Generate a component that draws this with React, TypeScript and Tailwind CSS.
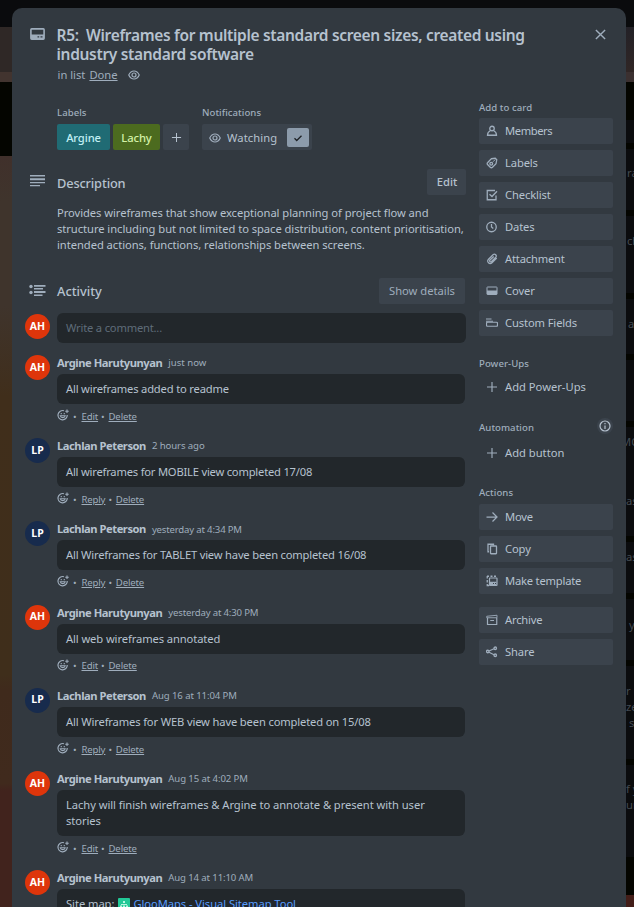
import type { ReactNode } from "react";

type IconProps = { className?: string };

function Svg({ children, className = "size-3" }: { children: ReactNode; className?: string }) {
  return (
    <svg viewBox="0 0 24 24" fill="none" stroke="currentColor" strokeWidth="2" className={`block shrink-0 ${className}`}>
      {children}
    </svg>
  );
}

const CardIcon = () => (
  <svg viewBox="0 0 15 12" className="block h-3 w-[15px] shrink-0 text-[#9fadbc]" fill="none">
    <rect x="0.9" y="0.9" width="13.200" height="10.200" rx="0.8" stroke="currentColor" strokeWidth="1.600" />
    <path d="M1 6.500h13V11H1z" fill="currentColor" />
    <path d="M7.500 8.800h1.700M10.500 8.800h2" stroke="#323940" strokeWidth="1.200" />
  </svg>
);
const EyeIcon = ({ className }: IconProps) => (
  <Svg className={className}>
    <path d="M1.500 12C4 6.500 7.500 4 12 4s8 2.500 10.500 8c-2.500 5.500-6 8-10.500 8s-8-2.500-10.500-8z" strokeWidth="2.400" />
    <circle cx="12" cy="12" r="4" strokeWidth="2.400" />
  </Svg>
);
const PlusIcon = ({ className }: IconProps) => (
  <Svg className={className}><path d="M12 2v20M2 12h20" strokeWidth="2.300" /></Svg>
);
const CheckIcon = ({ className }: IconProps) => (
  <Svg className={className}><path d="M5 12.500l4.500 4.500L19 7.500" strokeWidth="2.600" /></Svg>
);
const CloseIcon = ({ className }: IconProps) => (
  <Svg className={className}><path d="M3.500 3.500l17 17M20.500 3.500l-17 17" strokeWidth="2.600" /></Svg>
);
const MemberIcon = () => (
  <Svg className="mb-px size-3">
    <circle cx="12" cy="7" r="4.500" strokeWidth="2.600" />
    <path d="M8.500 11.500C4.500 13.500 3 16 3 20.500h18c0-4.500-1.500-7-5.500-9" strokeWidth="2.600" />
  </Svg>
);
const LabelIcon = () => (
  <Svg>
    <path d="M10.500 3.500l8-1 3 3-1.500 8-7 7c-1.500 1.500-3 1.500-4.500 0l-5-5c-1.500-1.500-1.500-3 0-4.500z" strokeWidth="2.600" />
    <circle cx="10.500" cy="13.500" r="2.800" strokeWidth="2.600" />
    <path d="M14 9.500l4-4" />
  </Svg>
);
const ChecklistIcon = () => (
  <Svg className="mb-px size-3">
    <path d="M18 3H2.500v18.500H20V13" strokeWidth="2.600" />
    <path d="M7 10.500l5 4.500L22 4.500" strokeWidth="2.800" />
  </Svg>
);
const ClockIcon = () => (
  <Svg className="mb-px size-3">
    <circle cx="11" cy="12" r="9.500" strokeWidth="2.600" />
    <path d="M11 6v6l3.500 3" strokeWidth="2.600" />
  </Svg>
);
const ClipIcon = () => (
  <Svg>
    <path d="M21.500 10l-9.500 9.500c-5 4.500-11.500-2-7-7L14 3.500c4-3.500 8.500 1.500 5.500 5L11 17c-2.500 2-5-.8-3-3L15.500 7" strokeWidth="2.500" />
  </Svg>
);
const CoverIcon = () => (
  <Svg>
    <rect x="2" y="4" width="20" height="15" rx="1" />
    <path d="M2 11h20v8H2z" fill="currentColor" stroke="none" />
  </Svg>
);
const FieldsIcon = () => (
  <Svg>
    <path d="M0 4h11M0 8.500h14" strokeWidth="2.200" />
    <rect x="1" y="10.500" width="22" height="8" rx="2" strokeWidth="2.400" />
  </Svg>
);
const ArrowIcon = () => (
  <Svg><path d="M1 12h21M13 3l9 9-9 9" strokeWidth="2.500" /></Svg>
);
const CopyIcon = () => (
  <Svg>
    <path d="M6 17.500H4V2.500h11V5" strokeWidth="2.600" />
    <rect x="9" y="6" width="12" height="15.500" rx="1" strokeWidth="2.600" />
  </Svg>
);
const TemplateIcon = () => (
  <Svg>
    <rect x="7" y="6" width="15" height="15" rx="1" strokeWidth="2.400" />
    <path d="M8 13.500h13V20H8z" fill="currentColor" stroke="none" />
    <path d="M14 17h2M18 17h2" stroke="#3b434c" />
    <path d="M2 2.500h4M9 2.500h4M16 2.500h4M2.500 2v5M2.500 10v5M2.500 18v3H6" strokeWidth="2.600" />
  </Svg>
);
const ArchiveIcon = () => (
  <Svg>
    <path d="M1.500 4.500L22 2.500V7.500H1.500z" strokeWidth="1.800" />
    <path d="M3 8v13h18.500V8M8.500 13h7.500" strokeWidth="2.400" />
  </Svg>
);
const ShareIcon = () => (
  <Svg>
    <circle cx="3.500" cy="11" r="2.500" strokeWidth="2.600" />
    <circle cx="18.500" cy="4.500" r="2.500" strokeWidth="2.600" />
    <circle cx="18.500" cy="18.500" r="2.500" strokeWidth="2.600" />
    <path d="M6 10l10-4.500M6 12.500l10 5" strokeWidth="2.400" />
  </Svg>
);
const ReactIcon = () => (
  <Svg className="mb-[4px] size-3">
    <path d="M14 3.500a9.300 9.300 0 1 0 6.500 8.500" strokeWidth="2.400" />
    <path d="M6.500 13.500c1 5 9 5 10 0zM8.500 8v2.500M14.500 8v2.500M20 1v7M16.500 4.500h7" strokeWidth="2.200" />
  </Svg>
);
const DescriptionIcon = () => (
  <svg viewBox="0 0 15 12" className="mb-[2px] h-3 w-[15px]" fill="currentColor">
    <path d="M0 0h15v1.400H0zM0 3.200h15v2.100H0zM0 7h15v1.300H0zM0 10h10v1.300H0z" />
  </svg>
);
const ActivityIcon = () => (
  <svg viewBox="0 0 17 13" className="mb-px h-[13px] w-[17px]" fill="currentColor">
    <circle cx="2" cy="2.500" r="1.700" />
    <circle cx="2" cy="8.500" r="1.700" />
    <path d="M5 1h11.500v1.700H5zM5 4h9v1.400H5zM5 7h11.500v1.900H5zM5 10.600h8.500V12H5z" />
  </svg>
);

function SideButton({ icon, label, spacing = "tracking-[-0.12px]" }: { icon: ReactNode; label: string; spacing?: string }) {
  return (
    <button className={`flex h-[26px] w-[134px] items-center gap-[7px] rounded-[2px] bg-[#3b434c] pl-[7px] text-left text-[11.2px] text-[#b6c2cf] ${spacing}`}>
      <span className="w-3 text-[#9fadbc]">{icon}</span>
      {label}
    </button>
  );
}

function PlainButton({ label }: { label: string }) {
  return (
    <button className="flex h-[26px] items-center gap-[7px] pl-[7px] text-[11.2px] text-[#b6c2cf]">
      <PlusIcon className="size-3 text-[#9fadbc]" />
      {label}
    </button>
  );
}

function Heading({ children }: { children: ReactNode }) {
  return <h3 className="h-4 text-[9.600px] leading-4 font-medium tracking-[0.04px] text-[#9fadbc]">{children}</h3>;
}

function Avatar({ who, className = "" }: { who: string; className?: string }) {
  return (
    <div className={`flex size-[25px] shrink-0 items-center justify-center rounded-full text-[10.500px] font-bold text-white ${who === "AH" ? "bg-[#de350b]" : "bg-[#172b4d]"} ${className}`}>
      {who}
    </div>
  );
}

type Entry = { who: "AH" | "LP"; time: string; timeSpacing?: string; body: ReactNode; spacing: string; tall?: boolean };

const entries: Entry[] = [
  { who: "AH", time: "just now", body: "All wireframes added to readme", spacing: "tracking-[-0.18px]" },
  { who: "LP", time: "2 hours ago", timeSpacing: "tracking-[-0.1px]", body: "All wireframes for MOBILE view completed 17/08", spacing: "tracking-[-0.21px]" },
  { who: "LP", time: "yesterday at 4:34 PM", timeSpacing: "tracking-[-0.180px]", body: "All Wireframes for TABLET view have been completed 16/08", spacing: "tracking-[-0.19px]" },
  { who: "AH", time: "yesterday at 4:30 PM", timeSpacing: "tracking-[-0.180px]", body: "All web wireframes annotated", spacing: "tracking-[-0.1px]" },
  { who: "LP", time: "Aug 16 at 11:04 PM", timeSpacing: "tracking-[-0.1px]", body: "All Wireframes for WEB view have been completed on 15/08", spacing: "tracking-[-0.15px]" },
  { who: "AH", time: "Aug 15 at 4:02 PM", timeSpacing: "tracking-[-0.1px]", body: "Lachy will finish wireframes & Argine to annotate & present with user stories", spacing: "tracking-[-0.06px]", tall: true },
  {
    who: "AH",
    time: "Aug 14 at 11:10 AM",
    timeSpacing: "tracking-[-0.130px]",
    body: (
      <span className="flex items-center">
        Site map:
        <span className="mr-[3px] ml-[4px] flex size-3 items-center justify-center rounded-[1px] bg-[#22c997] text-[#b8f5df]">
          <svg viewBox="0 0 12 12" className="size-3" fill="currentColor">
            <path d="M5 3h2v2H5zM3 6h6v1H3zM2 7.500h2v2H2zM5 7.500h2v2H5zM8 7.500h2v2H8z" />
          </svg>
        </span>
        <a className="text-[#579dff]">GlooMaps - Visual Sitemap Tool</a>
      </span>
    ),
    spacing: "tracking-[-0.06px]",
  },
];

function Comment({ entry }: { entry: Entry }) {
  return (
    <article className={`flex shrink-0 gap-[7px] ${entry.tall ? "h-[99.200px]" : "h-[83.200px]"}`}>
      <Avatar who={entry.who} />
      <div className="w-[408px]">
        <div className="flex h-[19px] items-center pb-[2px]">
          <span className="text-[11.200px] font-bold tracking-[-0.460px]">{entry.who === "AH" ? "Argine Harutyunyan" : "Lachlan Peterson"}</span>
          <span className={`ml-[6px] text-[9.600px] text-[#9fadbc] ${entry.timeSpacing ?? ""}`}>{entry.time}</span>
        </div>
        <div className={`rounded-[6px] bg-[#22272b] px-[9px] py-[7px] text-[11.200px] leading-4 ${entry.spacing} ${entry.tall ? "h-[46px]" : "h-[30px]"}`}>{entry.body}</div>
        <div className="mt-1.5 flex h-[14px] items-center text-[9.600px] tracking-[-0.15px] text-[#9fadbc]">
          <ReactIcon />
          <span className="mr-[5px] ml-[4px]">•</span>
          <a className="underline">{entry.who === "AH" ? "Edit" : "Reply"}</a>
          <span className="mr-[4px] ml-[3px]">•</span>
          <a className="underline">Delete</a>
        </div>
      </div>
    </article>
  );
}

/* Slivers of the board's cards that show to the right of the dialog. */
const slivers: { height: string; text?: string; pad?: string }[] = [
  { height: "h-[23px]" },
  { height: "h-[61px]", text: "ra", pad: "pt-4 pl-px" },
  { height: "h-[77px]", text: "ch", pad: "pt-[17px] pl-px" },
  { height: "h-[55px]", text: "a", pad: "pt-[17px] pl-[2px]" },
  { height: "h-[61px]" },
  { height: "h-[109px]", text: "MO", pad: "pt-[7px]" },
  { height: "h-[51px]", text: "as", pad: "pt-[7px]" },
  { height: "h-[61px]", text: "y", pad: "pt-[18px] pl-[3px]" },
  { height: "h-[93px]", text: "r n\nze\n s", pad: "pt-[17px]" },
  { height: "h-[92px]", text: "f y\nur", pad: "pt-4" },
];

export default function App() {
  return (
    <div className="flex h-[907px] w-[634px] overflow-hidden bg-[#0a0b0d] font-['Noto_Sans',sans-serif] text-[#b6c2cf]">
      <div className="w-3 shrink-0">
        <div className="h-[27px] bg-[#0a0b0d]" />
        <div className="h-[45px] bg-[#2f2826]" />
        <div className="h-[10px] bg-[#42342f]" />
        <div className="h-[74px] bg-[#040500]" />
        <div className="h-[751px] bg-[linear-gradient(178deg,#40302b_0%,#3f342c_6%,#3f342c_20%,#402e1b_32%,#3f2e1b_69%,#3f2a1c_71%,#402a1d_83.500%,#41231d_84.500%,#41231d_100%)]" />
      </div>

      <main className="mt-2 flex h-[899px] w-[614px] shrink-0 flex-col overflow-hidden rounded-t-[10px] bg-[#323940]">
        <header className="flex h-[92px] shrink-0 pt-[18px] pl-[18px]">
          <div className="pt-[2px]"><CardIcon /></div>
          <div className="ml-[11.500px] w-[530px]">
            <h1 className="text-[15.500px] leading-[19px] font-semibold tracking-[-0.320px] whitespace-pre">
              {"R5:  Wireframes for multiple standard screen sizes, created using\nindustry standard software"}
            </h1>
            <p className="mt-[3px] ml-[1px] flex h-4 items-center text-[11.200px] text-[#9fadbc]">
              in list <a className="ml-[4px] underline">Done</a>
              <EyeIcon className="ml-2.5 size-3" />
            </p>
          </div>
          <CloseIcon className="mt-[2px] ml-[7.500px] size-[13px] text-[#9fadbc]" />
        </header>

        <div className="flex">
          <section className="w-[467px] shrink-0">
            <div className="flex h-[69px] gap-[13px] pt-[5px] pl-[45px]">
              <div className="w-[132px]">
                <Heading>Labels</Heading>
                <div className="mt-[3px] flex gap-[3px] text-[11.200px] font-medium">
                  <span className="flex h-[26px] w-[53px] items-center justify-center rounded-[2px] bg-[#206b74] pt-[2px] tracking-[-0.1px] text-[#c1f0f5]">Argine</span>
                  <span className="flex h-[26px] w-[47px] items-center justify-center rounded-[2px] bg-[#4c6b1f] pt-[2px] tracking-[-0.1px] text-[#d3f1a7]">Lachy</span>
                  <span className="flex h-[26px] w-[26px] items-center justify-center rounded-[2px] bg-[#3b434c]"><PlusIcon className="size-[11px]" /></span>
                </div>
              </div>
              <div>
                <Heading>Notifications</Heading>
                <div className="mt-[3px] flex h-[26px] w-[110px] items-center rounded-[2px] bg-[#3b434c] pt-px pl-[7px] text-[11.200px]">
                  <EyeIcon className="size-3 text-[#9fadbc]" />
                  <span className="ml-[6px] pt-px tracking-[0.1px]">Watching</span>
                  <span className="mr-[3px] ml-auto flex h-[19px] w-[22px] items-center justify-center rounded-[2px] bg-[#8c9bab] text-[#1d2125]"><CheckIcon className="size-3" /></span>
                </div>
              </div>
            </div>

            <div className="flex h-[26px] items-center pl-[18px]">
              <span className="w-[27px] text-[#9fadbc]"><DescriptionIcon /></span>
              <h2 className="pt-[3px] text-[12.800px] font-medium tracking-[-0.16px]">Description</h2>
              <button className="mr-[13px] ml-auto h-[26px] w-[39px] rounded-[2px] bg-[#3b434c] pl-px text-[11.200px] font-medium">Edit</button>
            </div>
            <p className="mt-[10px] h-[73px] pl-[45px] text-[11.200px] leading-4 tracking-[-0.050px] whitespace-pre">
              {"Provides wireframes that show exceptional planning of project flow and\nstructure including but not limited to space distribution, content prioritisation,\nintended actions, functions, relationships between screens."}
            </p>

            <div className="flex h-[26px] items-center pl-[17px]">
              <span className="w-[28px] text-[#9fadbc]"><ActivityIcon /></span>
              <h2 className="pt-[2px] text-[12.800px] font-medium">Activity</h2>
              <button className="mr-[14px] ml-auto h-[26px] w-[86px] rounded-[2px] bg-[#3b434c] text-[11.200px] text-[#9fadbc]">Show details</button>
            </div>
            <div className="mt-[9px] mb-[12px] flex gap-[7px] pl-[13px]">
              <Avatar who="AH" className="mt-px" />
              <div className="h-[30px] w-[409px] rounded-[6px] bg-[#22272b] px-[9px] text-[11.200px] leading-[30px] tracking-[-0.2px] text-[#5f6c79]">Write a comment...</div>
            </div>
            <div className="flex flex-col pl-[13px]">
              {entries.map((entry) => <Comment key={entry.time} entry={entry} />)}
            </div>
          </section>

          <aside className="w-[134px] shrink-0">
            <Heading>Add to card</Heading>
            <div className="mt-[2px] flex flex-col gap-1.5">
              <SideButton icon={<MemberIcon />} label="Members" spacing="tracking-[-0.4px]" />
              <SideButton icon={<LabelIcon />} label="Labels" />
              <SideButton icon={<ChecklistIcon />} label="Checklist" />
              <SideButton icon={<ClockIcon />} label="Dates" />
              <SideButton icon={<ClipIcon />} label="Attachment" spacing="tracking-[-0.18px]" />
              <SideButton icon={<CoverIcon />} label="Cover" />
              <SideButton icon={<FieldsIcon />} label="Custom Fields" />
            </div>
            <div className="mt-5">
              <Heading>Power-Ups</Heading>
              <div className="mt-[2px]"><PlainButton label="Add Power-Ups" /></div>
            </div>
            <div className="mt-5">
              <div className="flex h-4 items-center justify-between">
                <Heading>Automation</Heading>
                <span className="mb-[5px] flex size-4 items-center justify-center rounded-full bg-[#3b434c]">
                  <Svg className="size-3"><circle cx="12" cy="12" r="10" strokeWidth="2.400" /><path d="M12 11v7M12 6v2.500" strokeWidth="2.400" /></Svg>
                </span>
              </div>
              <div className="mt-[4px]"><PlainButton label="Add button" /></div>
            </div>
            <div className="mt-[19px]">
              <Heading>Actions</Heading>
              <div className="mt-[3px] flex flex-col gap-1.5">
                <SideButton icon={<ArrowIcon />} label="Move" spacing="tracking-[-0.2px]" />
                <SideButton icon={<CopyIcon />} label="Copy" />
                <SideButton icon={<TemplateIcon />} label="Make template" spacing="tracking-[-0.2px]" />
              </div>
              <div className="mt-[13px] flex flex-col gap-1.5">
                <SideButton icon={<ArchiveIcon />} label="Archive" spacing="tracking-[-0.2px]" />
                <SideButton icon={<ShareIcon />} label="Share" />
              </div>
            </div>
          </aside>
        </div>
      </main>

      <div className="w-2 shrink-0 overflow-hidden bg-[#040500]">
        <div className="h-[27px] bg-[#0a0b0d]" />
        <div className="h-[45px] bg-linear-to-b from-[#232127] to-[#302625]" />
        <div className="h-[10px] bg-[#3b3030]" />
        <div className="flex h-[813px] flex-col gap-1.5 pt-[38px]">
          {slivers.map((sliver, i) => (
            <div key={i} className={`shrink-0 overflow-hidden bg-[#0b0c0e] text-[11.200px] leading-4 whitespace-pre text-[#444b52] ${sliver.height} ${sliver.pad ?? ""}`}>
              {sliver.text === "MO" ? (
                <>
                  <div className="-ml-[5px]">MO</div>
                  <div className="mt-[43px]">as</div>
                </>
              ) : (
                sliver.text
              )}
            </div>
          ))}
        </div>
        <div className="h-3 bg-[#431d18]" />
      </div>
    </div>
  );
}
